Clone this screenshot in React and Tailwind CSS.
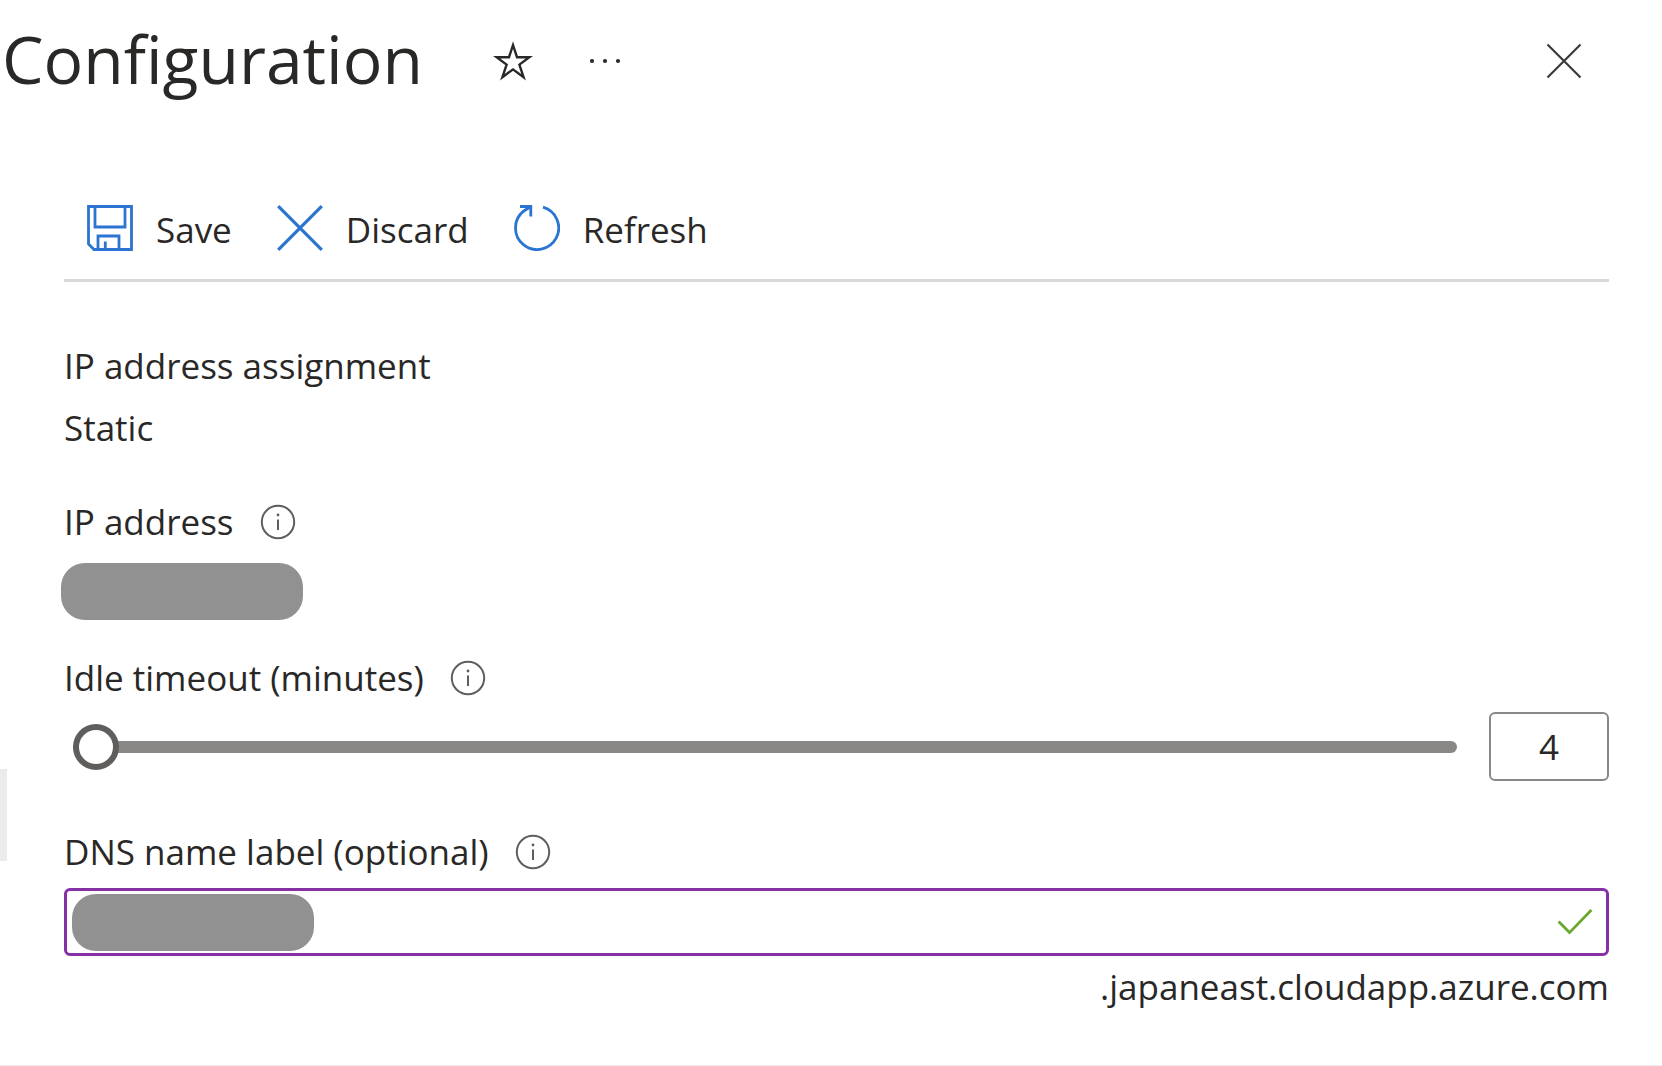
import { useState } from "react";

function StarIcon() {
  return (
    <svg width="40" height="42" viewBox="0 0 40 42" fill="none" stroke="#292827" strokeWidth="2.4" aria-hidden="true">
      <path d="M20 5 L24 17.2 H36.4 L26.4 24.6 L30.6 37.2 L20 29.4 L9.4 37.2 L13.6 24.6 L3.6 17.2 H16 Z" />
    </svg>
  );
}

function MoreIcon() {
  return (
    <svg width="32" height="8" viewBox="0 0 32 8" fill="#292827" aria-hidden="true">
      <circle cx="3" cy="4" r="2.1" />
      <circle cx="16" cy="4" r="2.1" />
      <circle cx="29" cy="4" r="2.1" />
    </svg>
  );
}

function CloseIcon() {
  return (
    <svg width="36" height="36" viewBox="0 0 36 36" stroke="#3b3a39" strokeWidth="2.2" aria-hidden="true">
      <path d="M1.5 1.5 L34.5 34.5 M34.5 1.5 L1.5 34.5" />
    </svg>
  );
}

function SaveIcon() {
  return (
    <svg width="46" height="46" viewBox="0 0 46 46" fill="none" stroke="#2b74d1" strokeWidth="2.8" aria-hidden="true">
      <path d="M1.5 1.5 H44.5 V44.5 H7 L1.5 39 Z" />
      <path d="M8 1.5 V22 H38 V1.5" />
      <path d="M11 44.5 V31 H32 V44.5" />
      <path d="M18.3 36.5 V44.5" />
    </svg>
  );
}

function DiscardIcon() {
  return (
    <svg width="46" height="46" viewBox="0 0 46 46" stroke="#2b74d1" strokeWidth="3.2" aria-hidden="true">
      <path d="M1.2 1.2 L44.8 44.8 M44.8 1.2 L1.2 44.8" />
    </svg>
  );
}

function RefreshIcon() {
  return (
    <svg width="46" height="46" viewBox="0 0 46 46" fill="none" stroke="#2b74d1" strokeWidth="2.8" aria-hidden="true">
      <path d="M29 2.2 A21.6 21.6 0 1 1 9.5 6.2 L16 2" />
      <path d="M6 1.5 H16.8 V11.5" />
    </svg>
  );
}

function CheckIcon() {
  return (
    <svg width="36" height="28" viewBox="0 0 36 28" fill="none" stroke="#6aa72d" strokeWidth="2.8" aria-hidden="true">
      <path d="M1.6 13.6 L12.5 24.6 L34.4 2" />
    </svg>
  );
}

function InfoButton({ label }) {
  return (
    <button type="button" aria-label={label} className="size-9 shrink-0">
      <svg width="36" height="36" viewBox="0 0 36 36" fill="none" stroke="#605e5c" aria-hidden="true">
        <circle cx="18" cy="18" r="16.2" strokeWidth="2" />
        <path d="M18 15.5 V26" strokeWidth="2" />
        <circle cx="18" cy="11" r="1.4" fill="#605e5c" stroke="none" />
      </svg>
    </button>
  );
}

function Command({ icon, children }) {
  return (
    <button type="button" className="flex items-start gap-[23px]">
      {icon}
      <span className="leading-[50px]">{children}</span>
    </button>
  );
}

function Redacted() {
  return <div className="h-[57px] w-[242px] rounded-3xl bg-[#919191]" />;
}

export default function App() {
  const [timeout, setTimeoutValue] = useState(4);
  return (
    <div className="relative min-h-screen border-b border-[#eeeeee] bg-white font-['Open_Sans','Segoe_UI',sans-serif] text-[35px] leading-[48px] text-[#292827]">
      <div className="absolute top-[769px] left-0 h-[92px] w-[7px] bg-[#edebe9]" />

      <header className="flex items-center pt-[18px] pr-20 pl-0.5">
        <h1 className="pb-1.5 text-[66px] leading-[80px]">Configuration</h1>
        <button type="button" aria-label="Add to favorites" className="ml-[70px]">
          <StarIcon />
        </button>
        <button type="button" aria-label="More options" className="ml-14 flex h-10 items-center">
          <MoreIcon />
        </button>
        <button type="button" aria-label="Close" className="ml-auto">
          <CloseIcon />
        </button>
      </header>

      <main className="pt-[101px] pr-[53px] pl-16">
        <div role="toolbar" aria-label="Commands" className="flex gap-[45px] border-b-[3px] border-[#d8d8d8] pb-6 pl-[23px]">
          <Command icon={<SaveIcon />}>Save</Command>
          <Command icon={<DiscardIcon />}>Discard</Command>
          <Command icon={<RefreshIcon />}>Refresh</Command>
        </div>

        <section className="mt-[60px]">
          <h2>IP address assignment</h2>
          <p className="mt-3.5">Static</p>
        </section>

        <section className="mt-[46px]">
          <div className="flex items-center gap-[26px]">
            <h2>IP address</h2>
            <InfoButton label="About IP address" />
          </div>
          <div className="mt-[17px] -ml-[3px]">
            <Redacted />
          </div>
        </section>

        <section className="mt-[34px]">
          <div className="flex items-center gap-[26px]">
            <label htmlFor="idle">Idle timeout (minutes)</label>
            <InfoButton label="About idle timeout" />
          </div>
          <div className="mt-2.5 flex items-center gap-8 pl-[9px]">
            <input
              id="idle"
              type="range"
              min="4"
              max="30"
              value={timeout}
              onChange={(e) => setTimeoutValue(Number(e.target.value))}
              className="h-[46px] min-w-0 flex-1 appearance-none bg-transparent [&::-webkit-slider-runnable-track]:h-3 [&::-webkit-slider-runnable-track]:rounded-full [&::-webkit-slider-runnable-track]:bg-[#8a8886] [&::-webkit-slider-thumb]:-mt-[17px] [&::-webkit-slider-thumb]:size-[46px] [&::-webkit-slider-thumb]:appearance-none [&::-webkit-slider-thumb]:rounded-full [&::-webkit-slider-thumb]:border-[6px] [&::-webkit-slider-thumb]:border-[#605e5c] [&::-webkit-slider-thumb]:bg-white"
            />
            <input
              type="text"
              aria-label="Idle timeout value"
              value={timeout}
              onChange={(e) => setTimeoutValue(Number(e.target.value) || 4)}
              className="h-[69px] w-[120px] rounded-md border-2 border-[#8a8886] text-center"
            />
          </div>
        </section>

        <section className="mt-[47px]">
          <div className="flex items-center gap-[26px]">
            <label htmlFor="dns">DNS name label (optional)</label>
            <InfoButton label="About DNS name label" />
          </div>
          <div className="relative mt-3">
            <input id="dns" type="text" className="block h-[68px] w-full rounded-md border-[3px] border-[#8530a5] px-3 outline-none" />
            <div className="pointer-events-none absolute inset-0 flex items-center justify-between pr-4 pl-2">
              <Redacted />
              <CheckIcon />
            </div>
          </div>
          <p className="mt-[7px] text-right">.japaneast.cloudapp.azure.com</p>
        </section>
      </main>
    </div>
  );
}
